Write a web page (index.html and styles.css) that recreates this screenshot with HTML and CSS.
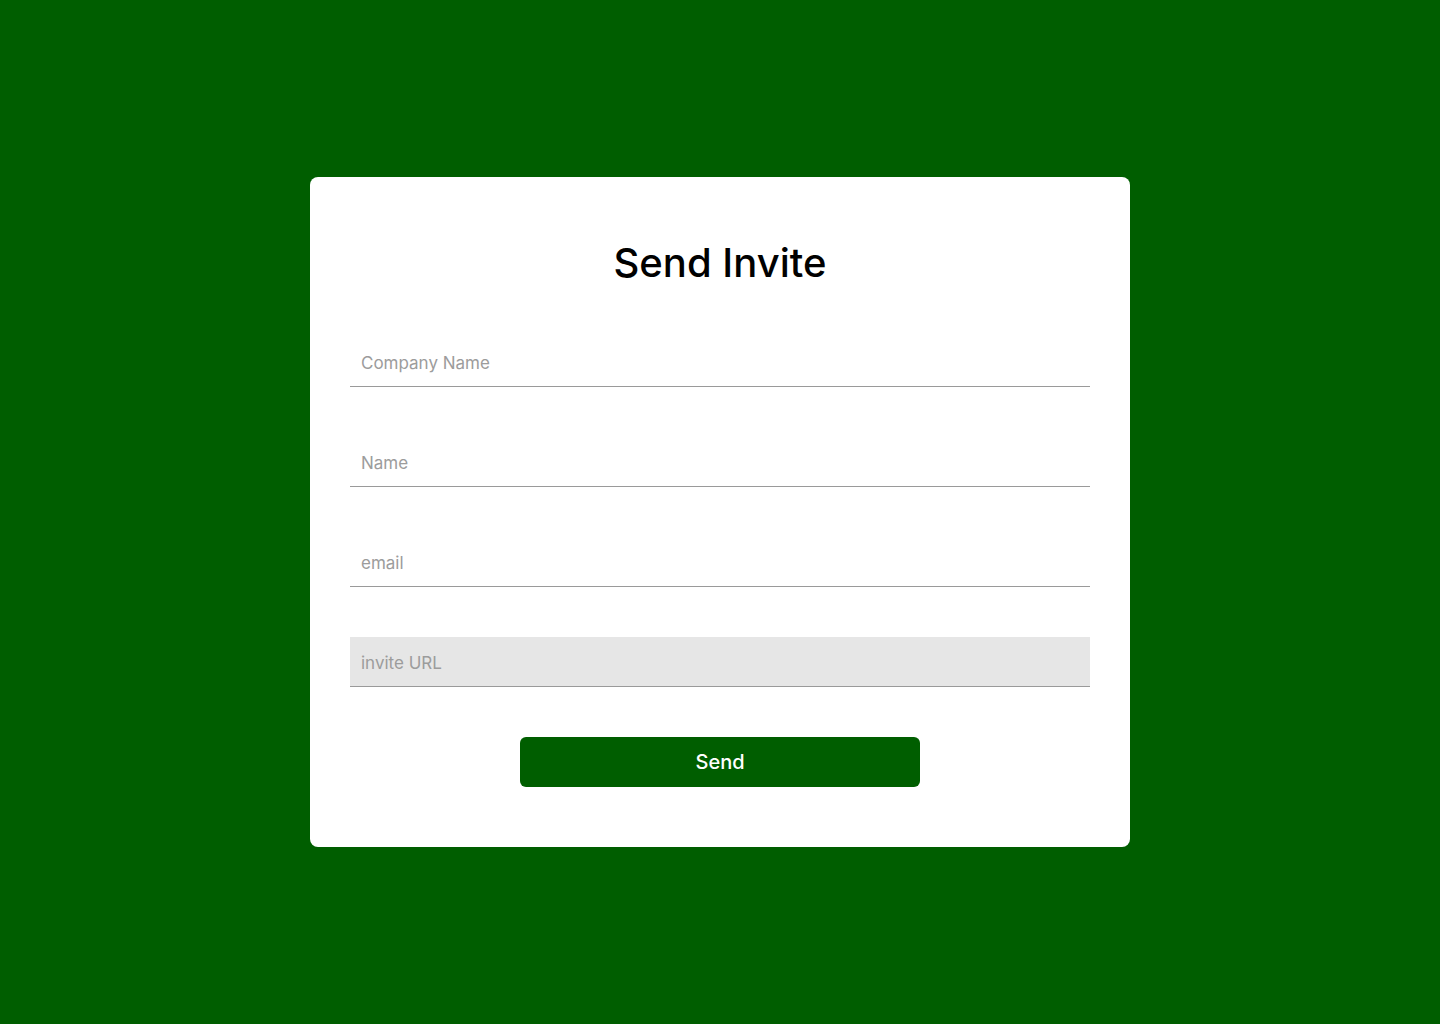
FILE: index.html
```html
<!DOCTYPE html>
<html lang="en">
<head>
<meta charset="utf-8">
<title>Send Invite</title>
<link rel="stylesheet" href="styles.css">
</head>
<body>
<main class="page">
  <form class="card" onsubmit="return false;">
    <h1 class="title">Send Invite</h1>
    <div class="fields">
      <input class="field" type="text" placeholder="Company Name">
      <input class="field" type="text" placeholder="Name">
      <input class="field" type="email" placeholder="email">
      <input class="field field-readonly" type="text" placeholder="invite URL" readonly>
    </div>
    <button class="send" type="submit">Send</button>
  </form>
</main>
</body>
</html>
```
FILE: styles.css
```css
* { box-sizing: border-box; }
html, body {
  margin: 0;
  padding: 0;
  height: 100%;
}
body {
  background: #005e00;
  font-family: Inter, "Noto Sans", sans-serif;
}
.page {
  min-height: 1024px;
  display: flex;
  align-items: center;
  justify-content: center;
}
.card {
  width: 820px;
  height: 670px;
  background: #ffffff;
  border-radius: 8px;
  padding: 60px 40px 60px;
  display: flex;
  flex-direction: column;
  align-items: center;
}
.title {
  margin: 0;
  height: 50px;
  line-height: 52px;
  font-size: 40px;
  font-weight: 500;
  letter-spacing: 0;
  color: #000;
}
.fields {
  width: 100%;
  margin-top: 50px;
  display: flex;
  flex-direction: column;
  gap: 50px;
}
.field {
  width: 100%;
  height: 50px;
  border: 0;
  border-bottom: 1px solid #9a9a9a;
  background: transparent;
  padding: 2px 10px 0 11px;
  font-family: Inter, "Noto Sans", sans-serif;
  font-size: 17px;
  color: #333;
  outline: none;
}
.field::placeholder { color: #9c9c9c; }
.field-readonly { background: #e6e6e6; }
.send {
  margin-top: 50px;
  width: 400px;
  height: 50px;
  border: 0;
  border-radius: 6px;
  background: #005e00;
  color: #ffffff;
  font-family: Inter, "Noto Sans", sans-serif;
  font-size: 20px;
  font-weight: 500;
  cursor: pointer;
}
```
